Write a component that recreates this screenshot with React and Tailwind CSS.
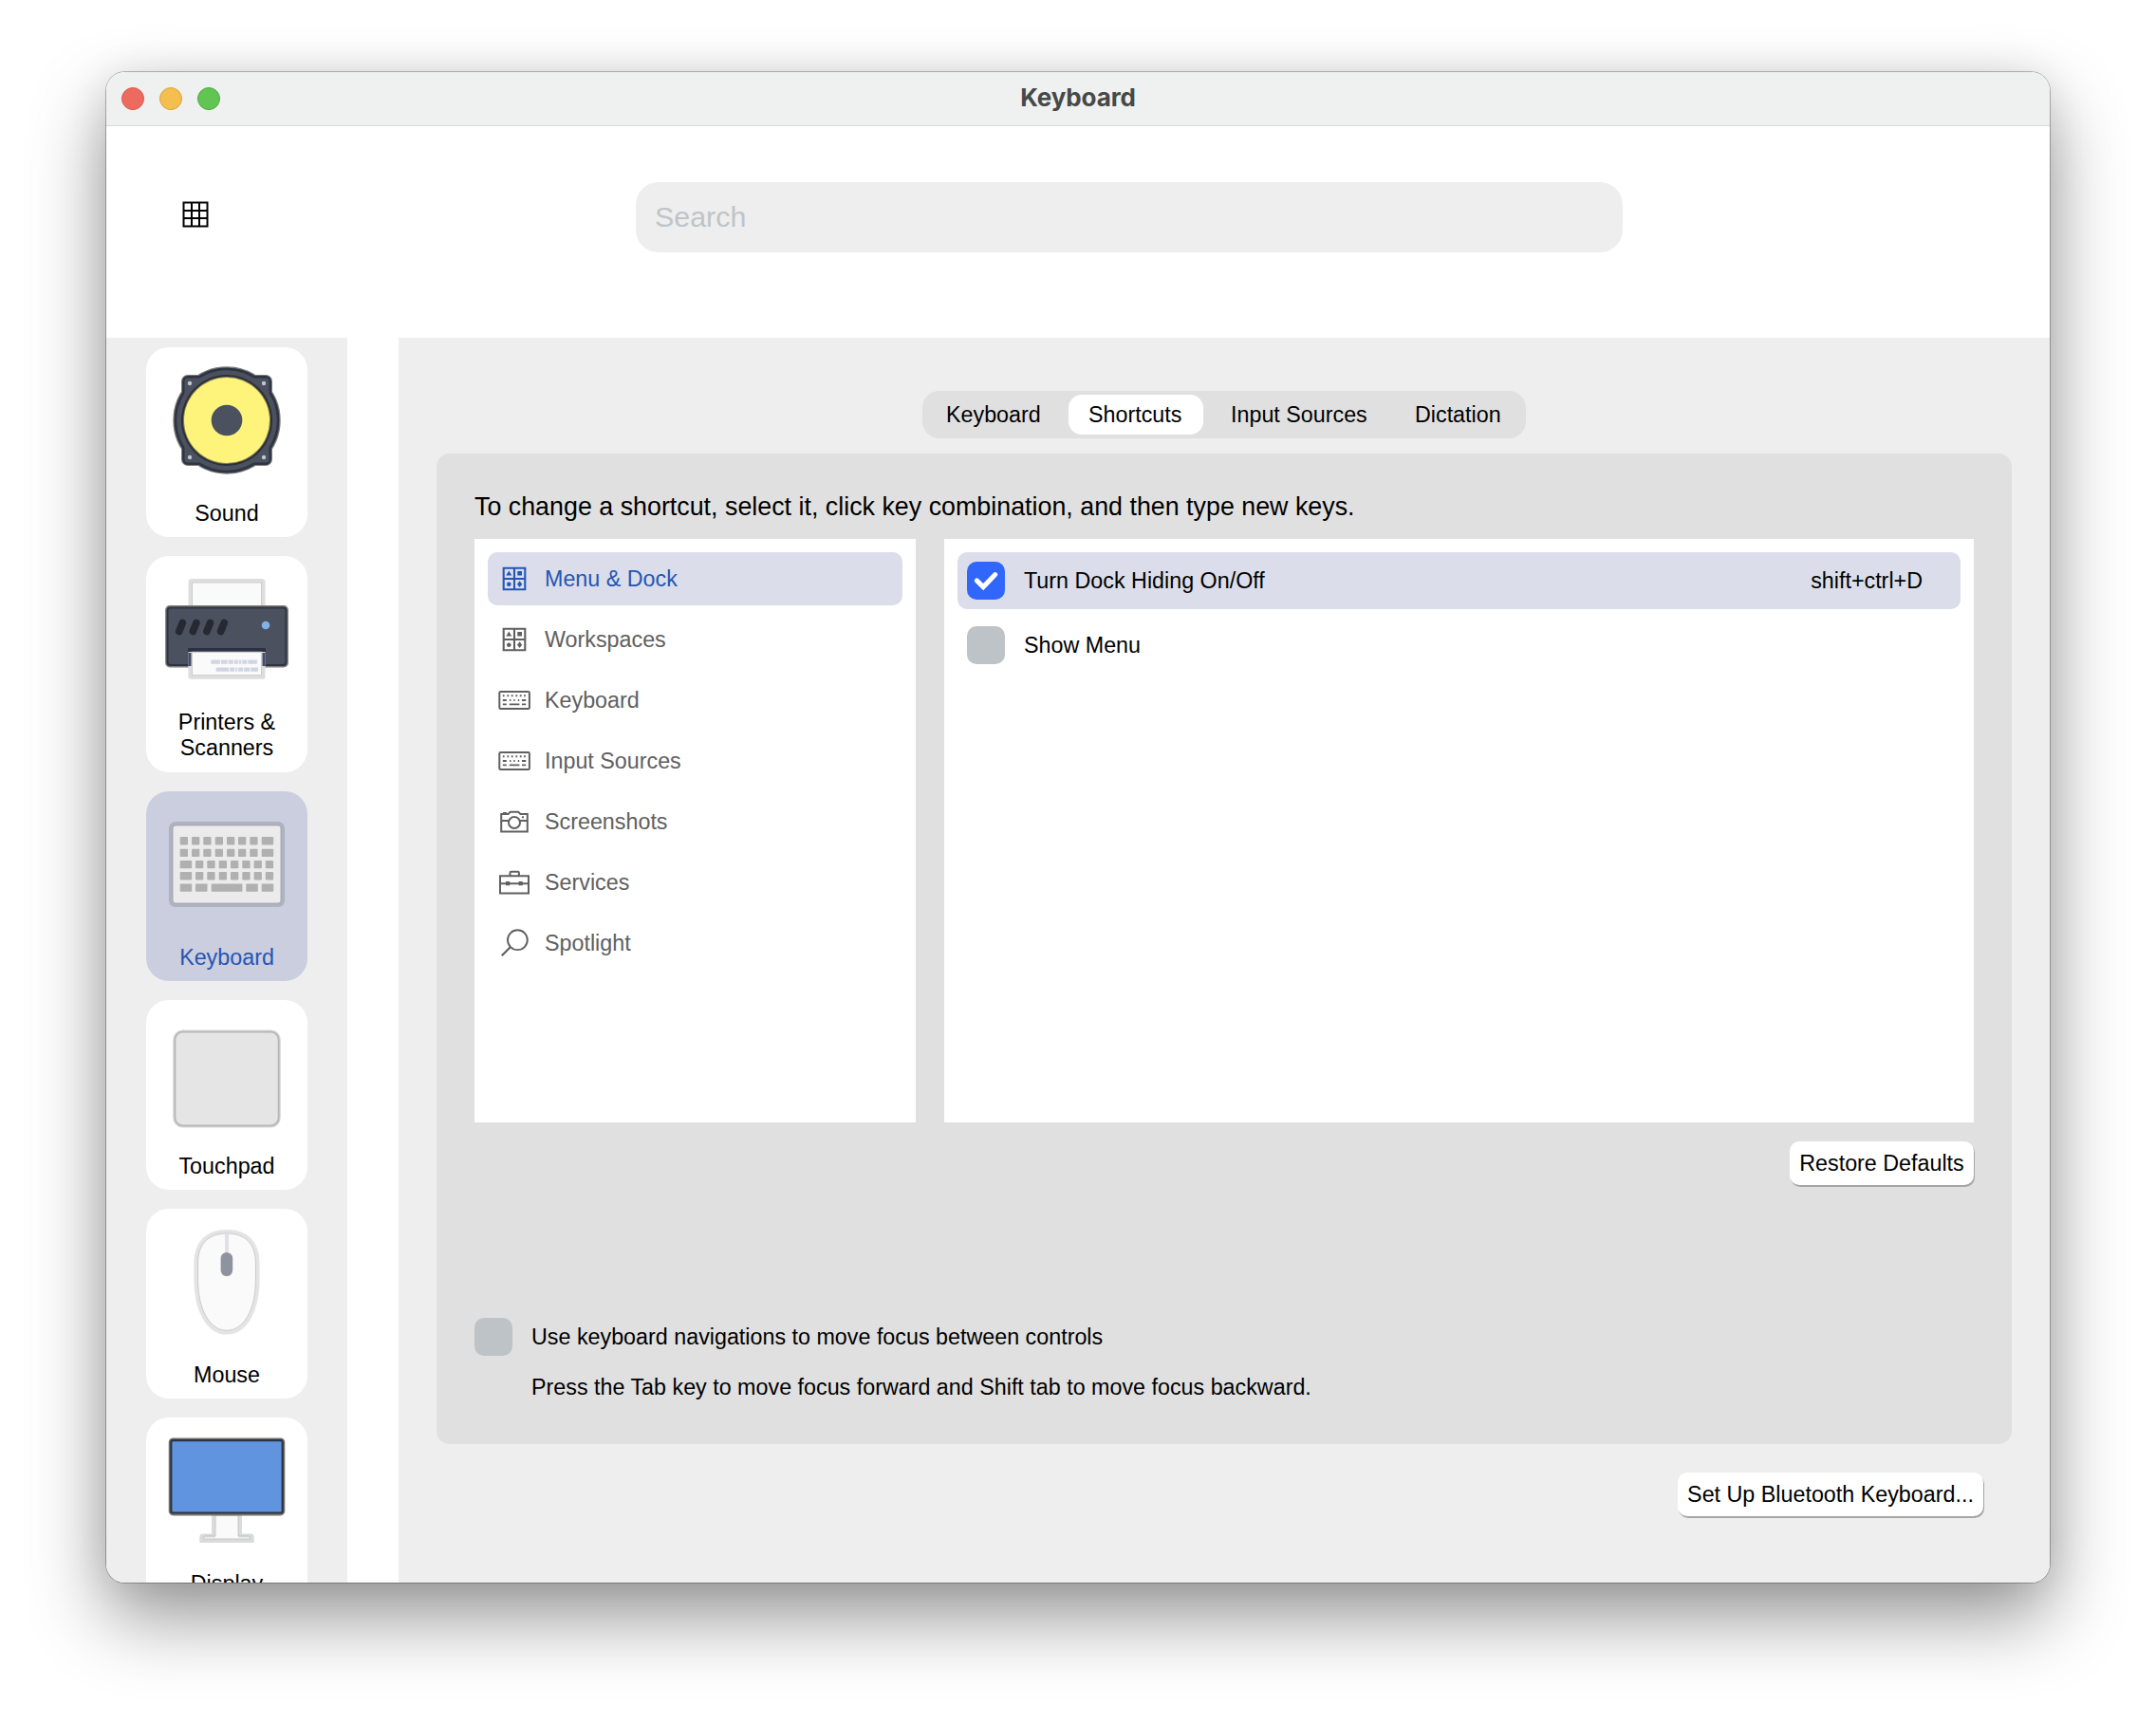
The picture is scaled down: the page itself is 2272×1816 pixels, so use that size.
const Svg = ({ w = 170, h = 161, children, className = "" }) => (
  <svg width={w} height={h} viewBox={`0 0 ${w} ${h}`} fill="none" className={`block shrink-0 ${className}`}>
    {children}
  </svg>
);

const SoundArt = () => (
  <Svg>
    <g stroke="#7d7d7b" strokeWidth="6" strokeLinejoin="round" fill="#7d7d7b">
      <rect x="40" y="32" width="90" height="90" rx="4" />
      <circle cx="85" cy="77" r="53.7" />
    </g>
    <g stroke="#2f3442" strokeWidth="3.2" fill="#2f3442">
      <rect x="39.7" y="31.7" width="90.6" height="90.6" rx="4" />
      <circle cx="85" cy="77" r="53.8" />
    </g>
    <rect x="40.5" y="32.5" width="89" height="89" rx="3" fill="#4c515f" />
    <circle cx="85" cy="77" r="52.8" fill="#4c515f" />
    <circle cx="85" cy="77" r="48" fill="#2b2f3a" />
    <circle cx="85" cy="77" r="46" fill="#8a8550" />
    <circle cx="85" cy="77" r="45" fill="#fef47c" />
    <circle cx="85" cy="77" r="16.3" fill="#4c515f" />
    {[46, 124].map((x) => [38, 116].map((y) => <circle key={`${x}-${y}`} cx={x} cy={y} r="2.2" fill="#c3c6cf" />))}
  </Svg>
);

const PrinterArt = () => (
  <Svg>
    <rect x="46.5" y="26" width="77" height="34" rx="1.5" fill="#fafafa" stroke="#dedede" strokeWidth="4" />
    <rect x="48.5" y="28" width="73" height="30" stroke="#cccccc" />
    <rect x="21.3" y="53.3" width="127.4" height="63" rx="3.5" fill="#4c515f" stroke="#7d7d7b" strokeWidth="2.4" />
    <rect x="22.5" y="54.5" width="125" height="60.5" rx="3" fill="#4c515f" stroke="#2f3442" strokeWidth="2" />
    {[36.5, 51.1, 65.7, 80.4].map((x) => (
      <path key={x} d={`M${x + 1.8} 70.5 L${x - 1.8} 79.5`} stroke="#262931" strokeWidth="7.6" strokeLinecap="round" />
    ))}
    <circle cx="126" cy="73" r="4.3" fill="#84afe8" />
    <rect x="44" y="97" width="82" height="5" rx="1" fill="#2b3042" />
    <path d="M46.5 101V127.7H123.5V101" stroke="#dedede" strokeWidth="4" strokeLinejoin="round" />
    <path d="M46 102V116M124 102V116" stroke="#454d6d" strokeWidth="3" />
    <rect x="48.5" y="101.2" width="73" height="24.5" fill="#fafafa" stroke="#cccccc" />
    <path d="M68.3 111.7H118" stroke="#d0d5e4" strokeWidth="4.2" strokeDasharray="9.5 1 7 1 5 1 4 1 2.5 1 5 1" />
    <path d="M73.7 119.7H118" stroke="#d0d5e4" strokeWidth="4.2" strokeDasharray="13.5 1 5 1 2 1 5 1 6 1" />
  </Svg>
);

const KEY_ROWS = [
  { y: 48.1, keys: [[35.7, 8.3], [48, 8.3], [60.3, 8.3], [72.7, 8.3], [85, 8.3], [97, 8.3], [109.3, 8.3], [121.7, 12.5]] },
  { y: 60.7, keys: [[35.7, 8.3], [48, 8.3], [60.3, 8.3], [72.7, 8.3], [85, 8.3], [97, 8.3], [109.3, 8.3], [121.7, 12.5]] },
  { y: 72.9, keys: [[35.7, 12.5], [52, 8.3], [64.3, 8.3], [76.7, 8.3], [89, 8.3], [101.3, 8.3], [113.6, 8.3], [125.8, 8.3]] },
  { y: 85.1, keys: [[35.7, 12.5], [52, 8.3], [64.3, 8.3], [76.7, 8.3], [89, 8.3], [101.3, 8.3], [113.6, 8.3], [125.8, 8.3]] },
  { y: 97.4, keys: [[35.7, 12.5], [52, 12.5], [68.7, 32.7], [105.3, 12.5], [121.7, 12.5]] },
];

const KeyboardArt = () => (
  <Svg>
    <rect x="26" y="34" width="118" height="86" rx="5" fill="#ebebeb" stroke="#afb2c0" strokeWidth="4.2" />
    <rect x="28" y="36" width="114" height="82" rx="3" stroke="#a2a2a6" strokeWidth="0.8" />
    {KEY_ROWS.map(({ y, keys }) => keys.map(([x, w]) => (
      <rect key={`${x}-${y}`} x={x} y={y} width={w} height="8.3" rx="0.8" fill="#b0b0b0" />
    )))}
  </Svg>
);

const TouchpadArt = () => (
  <Svg>
    <rect x="29.5" y="32.8" width="111" height="100.4" rx="9" stroke="#d6d6d6" strokeWidth="2.5" />
    <rect x="30.4" y="33.7" width="109.2" height="98.6" rx="8" fill="#e5e5e5" stroke="#b6b6b6" strokeWidth="1.8" />
  </Svg>
);

const MOUSE_BODY = "M85 24C106 24 117.5 36 117.5 57V75C117.5 108 104 130.5 85 130.5C66 130.5 52.5 108 52.5 75V57C52.5 36 64 24 85 24Z";
const MOUSE_EDGE = "M85 26C105 26 115.4 37.5 115.4 57V75C115.4 107 102.5 128.3 85 128.3C67.5 128.3 54.6 107 54.6 75V57C54.6 37.5 65 26 85 26Z";

const MouseArt = () => (
  <Svg>
    <path d={MOUSE_BODY} fill="#fafafa" stroke="#e4e4e4" strokeWidth="4.2" />
    <path d={MOUSE_EDGE} stroke="#c6c6c6" strokeWidth="0.9" />
    <path d="M85 26.3V48" stroke="#dfe1e5" strokeWidth="4" />
    <rect x="78.6" y="46" width="12.6" height="25" rx="6.3" fill="#8f939f" />
  </Svg>
);

const DisplayArt = () => (
  <Svg>
    <path d="M71 102V124.5H59.5Q58.3 124.5 58.3 126.5V130H111.7V126.5Q111.7 124.5 110.5 124.5H99V102Z" fill="#fafafa" stroke="#dadbdb" strokeWidth="4" />
    <path d="M73 102V124.8M97 102V124.8M73 124.8H62Q60.5 124.8 60.5 128H109.5Q109.5 124.8 108 124.8H97" stroke="#c4c4c4" strokeWidth="0.9" />
    <rect x="25" y="22.7" width="120" height="79.5" rx="3.5" stroke="#77776f" strokeWidth="2.6" />
    <rect x="26.3" y="24.2" width="117.4" height="76.3" rx="2" fill="#6194de" stroke="#2b3346" strokeWidth="2.2" />
  </Svg>
);

const GridMenuIcon = () => (
  <Svg w={34} h={34}>
    <path d="M5.7 5.7H28.3V28.3H5.7ZM17 5.7V28.3M5.7 17H28.3" stroke="currentColor" strokeWidth="2.1" />
    <path d="M11.3 8.5L14.3 13.5H8.3ZM20.3 9H25V13.6H20.3ZM22.6 19.3L25.2 22.7L22.6 26.1L20 22.7Z" fill="currentColor" />
    <circle cx="11.3" cy="22.7" r="2.3" fill="currentColor" />
  </Svg>
);

const KeysIcon = () => (
  <Svg w={34} h={34}>
    <rect x="1.3" y="7.9" width="31.6" height="18.2" rx="1.3" stroke="currentColor" strokeWidth="2" />
    <path d="M4.8 12.3H6.6M9.4 12.3H11.2M13.8 12.3H15.6M18.4 12.3H20.2M22.8 12.3H24.6M27.1 12.3H28.9M4.8 17H8.8M12 17H13.4M16.3 17H17.7M20.8 17H22.2M25 17H29.2M4.8 21.4H8.8M11.8 21.4H22.4M25 21.4H29.2" stroke="currentColor" strokeWidth="1.9" />
  </Svg>
);

const CameraIcon = () => (
  <Svg w={34} h={34}>
    <path d="M3.2 9H10.5L12.8 6.8H21.2L23.5 9H30.8V27.5H3.2ZM5 8H9M3.2 16H11M23 16H30.8" stroke="currentColor" strokeWidth="2" />
    <circle cx="17" cy="18" r="6" stroke="currentColor" strokeWidth="2" />
    <rect x="25" y="11.3" width="2" height="2" fill="currentColor" />
  </Svg>
);

const ToolboxIcon = () => (
  <Svg w={34} h={34}>
    <path d="M2 10.2H32V28.6H2ZM2 18.2H32M12.5 10V7Q12.5 5.8 13.7 5.8H20.7Q21.9 5.8 21.9 7V10" stroke="currentColor" strokeWidth="2" />
    <path d="M8 16.1H12.2V20.3H8ZM21.6 16.1H25.8V20.3H21.6Z" fill="currentColor" />
  </Svg>
);

const MagnifierIcon = () => (
  <Svg w={34} h={34}>
    <circle cx="20.4" cy="13.7" r="10.4" stroke="currentColor" strokeWidth="1.9" />
    <path d="M13 21L3.8 30.2" stroke="currentColor" strokeWidth="2.2" />
  </Svg>
);

const NAV = [
  { label: "Sound", Art: SoundArt },
  { label: "Printers & Scanners", Art: PrinterArt, tall: true },
  { label: "Keyboard", Art: KeyboardArt, active: true },
  { label: "Touchpad", Art: TouchpadArt },
  { label: "Mouse", Art: MouseArt },
  { label: "Display", Art: DisplayArt },
];

const GROUPS = [
  { label: "Menu & Dock", Icon: GridMenuIcon, active: true },
  { label: "Workspaces", Icon: GridMenuIcon },
  { label: "Keyboard", Icon: KeysIcon },
  { label: "Input Sources", Icon: KeysIcon },
  { label: "Screenshots", Icon: CameraIcon },
  { label: "Services", Icon: ToolboxIcon },
  { label: "Spotlight", Icon: MagnifierIcon },
];

const TABS = [
  { label: "Keyboard", width: "w-[142px]" },
  { label: "Shortcuts", width: "w-[142px]", active: true },
  { label: "Input Sources", width: "w-[186px]" },
  { label: "Dictation", width: "w-[130px]" },
];

const Checkbox = ({ checked }) => (
  <span className={`flex size-10 shrink-0 rounded-[10px] ${checked ? "bg-[#3067fa]" : "bg-[#bdc3c6]"}`}>
    {checked && (
      <Svg w={40} h={40}>
        <path d="M10.3 19.9L17.2 26.6L29.8 13.6" stroke="white" strokeWidth="5" strokeLinecap="round" />
      </Svg>
    )}
  </span>
);

const Button = ({ children, className }) => (
  <button className={`flex items-center justify-center rounded-[10px] bg-white text-black shadow-[1px_2px_0_#a6a6a6] whitespace-nowrap ${className}`}>
    {children}
  </button>
);

export default function App() {
  return (
    <div className="h-[1816px] w-[2272px] overflow-hidden bg-white pt-[76px] pl-28 font-['Liberation_Sans',Arial,sans-serif] text-[23.3px]/[28px] text-black">
      <div className="h-[1592px] w-[2048px] rounded-[20px] shadow-[0_0_0_1px_rgba(0,0,0,0.26),0_36px_80px_rgba(0,0,0,0.42),0_0_40px_rgba(0,0,0,0.08)]">
        <div className="flex h-full flex-col overflow-hidden rounded-[20px] bg-white">
          <header className="grid h-[57px] shrink-0 grid-cols-3 items-center border-b border-[#d8dad9] bg-[#eff1f0] px-4">
            <div className="flex gap-4">
              <span className="size-6 rounded-full border border-[#d8564b] bg-[#ed6a5e]" />
              <span className="size-6 rounded-full border border-[#dba03c] bg-[#f5bf4f]" />
              <span className="size-6 rounded-full border border-[#4fa73c] bg-[#61c554]" />
            </div>
            <h1 className="pb-0.5 text-center font-['Inter',sans-serif] text-[26px]/[30px] font-bold tracking-[-0.1px] text-[#464948]">Keyboard</h1>
          </header>

          <div className="flex h-[223px] shrink-0 items-start">
            <Svg w={28} h={28} className="mt-[79px] ml-20">
              <path d="M1.5 1.5H26.5V26.5H1.5ZM10 1V27M18 1V27M1 10H27M1 18H27" stroke="#000" strokeWidth="2" />
            </Svg>
            <div className="mt-[59px] ml-[450px] flex h-[74px] w-[1040px] items-center rounded-3xl bg-[#eeeeee] px-5 pb-0.5 text-[30.4px] text-[#bfc4c7]">
              Search
            </div>
          </div>

          <div className="flex min-h-0 flex-1">
            <nav className="flex w-[254px] shrink-0 flex-col gap-5 overflow-hidden bg-[#eeeeee] pt-2.5 pl-[42px]">
              {NAV.map(({ label, Art, active, tall }) => (
                <div
                  key={label}
                  className={`flex w-[170px] shrink-0 flex-col rounded-3xl text-center leading-[27px] ${tall ? "h-[228px]" : "h-[200px]"} ${active ? "bg-[#cbcede] text-[#2456b4]" : "bg-white"}`}
                >
                  <Art />
                  <span className="px-6 pt-px">{label}</span>
                </div>
              ))}
            </nav>

            <main className="ml-[54px] flex flex-1 flex-col bg-[#eeeeee] px-10 pt-14">
              <div className="flex h-[50px] w-[636px] gap-2 self-center rounded-[18px] bg-[#e0e0e0] p-1">
                {TABS.map(({ label, width, active }) => (
                  <span
                    key={label}
                    className={`flex shrink-0 items-center rounded-[14px] pl-[21px] whitespace-nowrap ${width} ${active ? "bg-white" : ""}`}
                  >
                    {label}
                  </span>
                ))}
              </div>

              <section className="mt-4 flex h-[1044px] flex-col rounded-[14px] bg-[#e0e0e0] px-10">
                <p className="flex h-[90px] items-end pb-[19px] text-[26.84px]/[30px] whitespace-nowrap">
                  To change a shortcut, select it, click key combination, and then type new keys.
                </p>
                <div className="flex h-[615px] gap-[30px]">
                  <ul className="flex w-[465px] flex-col gap-2 bg-white p-3.5">
                    {GROUPS.map(({ label, Icon, active }) => (
                      <li
                        key={label}
                        className={`flex h-14 items-center gap-[15px] rounded-[10px] pl-[11px] ${active ? "bg-[#dbdeea] text-[#2456b4]" : "text-[#606060]"}`}
                      >
                        <Icon />
                        <span>{label}</span>
                      </li>
                    ))}
                  </ul>
                  <ul className="flex flex-1 flex-col gap-2 bg-white p-3.5">
                    <li className="flex h-[60px] items-center gap-5 rounded-[10px] bg-[#dbdeea] pr-10 pl-2.5">
                      <Checkbox checked />
                      <span className="flex-1">Turn Dock Hiding On/Off</span>
                      <span>shift+ctrl+D</span>
                    </li>
                    <li className="flex h-[60px] items-center gap-5 pl-2.5">
                      <Checkbox />
                      <span>Show Menu</span>
                    </li>
                  </ul>
                </div>
                <Button className="mt-5 h-[46px] w-[194px] self-end">Restore Defaults</Button>
                <div className="mt-[140px] flex items-center gap-5">
                  <Checkbox />
                  <span>Use keyboard navigations to move focus between controls</span>
                </div>
                <p className="mt-[19px] pl-[60px]">Press the Tab key to move focus forward and Shift tab to move focus backward.</p>
              </section>

              <Button className="mt-[30px] mr-[30px] h-[46px] w-[322px] self-end">Set Up Bluetooth Keyboard...</Button>
            </main>
          </div>
        </div>
      </div>
    </div>
  );
}
